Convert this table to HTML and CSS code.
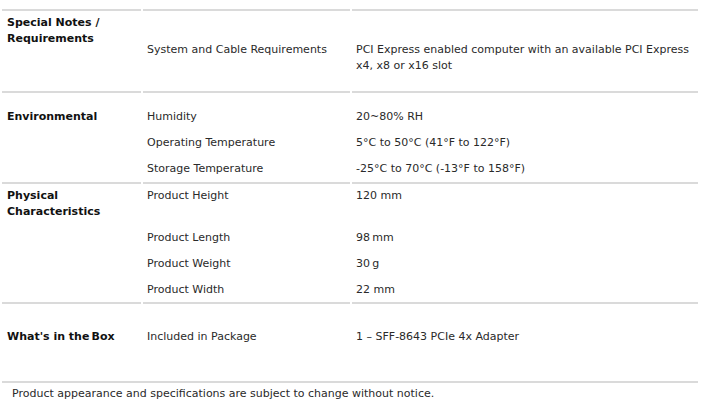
FILE: index.html
```html
<!DOCTYPE html>
<html>
<head>
<meta charset="utf-8">
<link rel="stylesheet" href="styles.css">
</head>
<body>
<table class="specs">
  <colgroup>
    <col class="c1"><col class="c2"><col class="c3">
  </colgroup>
  <tbody class="group">
    <tr class="first">
      <th class="head pt-4">Special Notes /<br>Requirements</th>
      <td class="pt-31 pb-17">System and Cable Requirements</td>
      <td class="pt-31 pb-17">PCI Express enabled computer with an available PCI Express x4, x8 or x16 slot</td>
    </tr>
  </tbody>
  <tbody class="group">
    <tr class="first">
      <th class="head pt-16">Environmental</th>
      <td class="pt-16">Humidity</td>
      <td class="pt-16">20~80% RH</td>
    </tr>
    <tr>
      <th></th>
      <td>Operating Temperature</td>
      <td>5°C to 50°C (41°F to 122°F)</td>
    </tr>
    <tr class="last">
      <th></th>
      <td>Storage Temperature</td>
      <td>-25°C to 70°C (-13°F to 158°F)</td>
    </tr>
  </tbody>
  <tbody class="group">
    <tr class="first">
      <th class="head pt-4">Physical<br>Characteristics</th>
      <td class="pt-4">Product Height</td>
      <td class="pt-4">120 mm</td>
    </tr>
    <tr>
      <th></th>
      <td>Product Length</td>
      <td>98&#8201;mm</td>
    </tr>
    <tr>
      <th></th>
      <td>Product Weight</td>
      <td>30&#8201;g</td>
    </tr>
    <tr>
      <th></th>
      <td>Product Width</td>
      <td>22 mm</td>
    </tr>
  </tbody>
  <tbody class="group">
    <tr class="first">
      <th class="head pt-25 pb-36">What's in the&#8201;Box</th>
      <td class="pt-25 pb-36">Included in Package</td>
      <td class="pt-25 pb-36">1 – SFF-8643 PCIe 4x Adapter</td>
    </tr>
  </tbody>
  <tfoot>
    <tr>
      <td colspan="3" class="note">Product appearance and specifications are subject to change without notice.</td>
    </tr>
  </tfoot>
</table>
</body>
</html>
```
FILE: styles.css
```css
html, body {
  margin: 0;
  padding: 0;
  background: #ffffff;
}

body {
  font-family: "DejaVu Sans", Verdana, sans-serif;
  font-size: 11px;
  line-height: 16px;
  color: #2a2a2a;
}

.specs {
  width: 700px;
  table-layout: fixed;
  border-collapse: separate;
  border-spacing: 2px 0;
  margin-top: 9px;
}

.c1 { width: 139px; }
.c2 { width: 207px; }
.c3 { width: 346px; }

.specs th,
.specs td {
  text-align: left;
  vertical-align: top;
  padding: 6px 4px 4px 4px;
  font-weight: normal;
}

.specs th {
  padding-left: 5px;
}

.specs .head {
  font-weight: bold;
  color: #111111;
}

.group .first th,
.group .first td {
  border-top: 2px solid #dadada;
}

.specs .last th,
.specs .last td {
  padding-bottom: 5px;
}

.specs .pt-4 { padding-top: 4px; }
.specs .pt-16 { padding-top: 16px; }
.specs .pt-25 { padding-top: 25px; }
.specs .pt-31 { padding-top: 31px; }
.specs .pb-17 { padding-bottom: 17px; }
.specs .pb-36 { padding-bottom: 36px; }

.specs .note {
  border-top: 2px solid #dadada;
  padding: 3px 4px 4px 10px;
}
```
